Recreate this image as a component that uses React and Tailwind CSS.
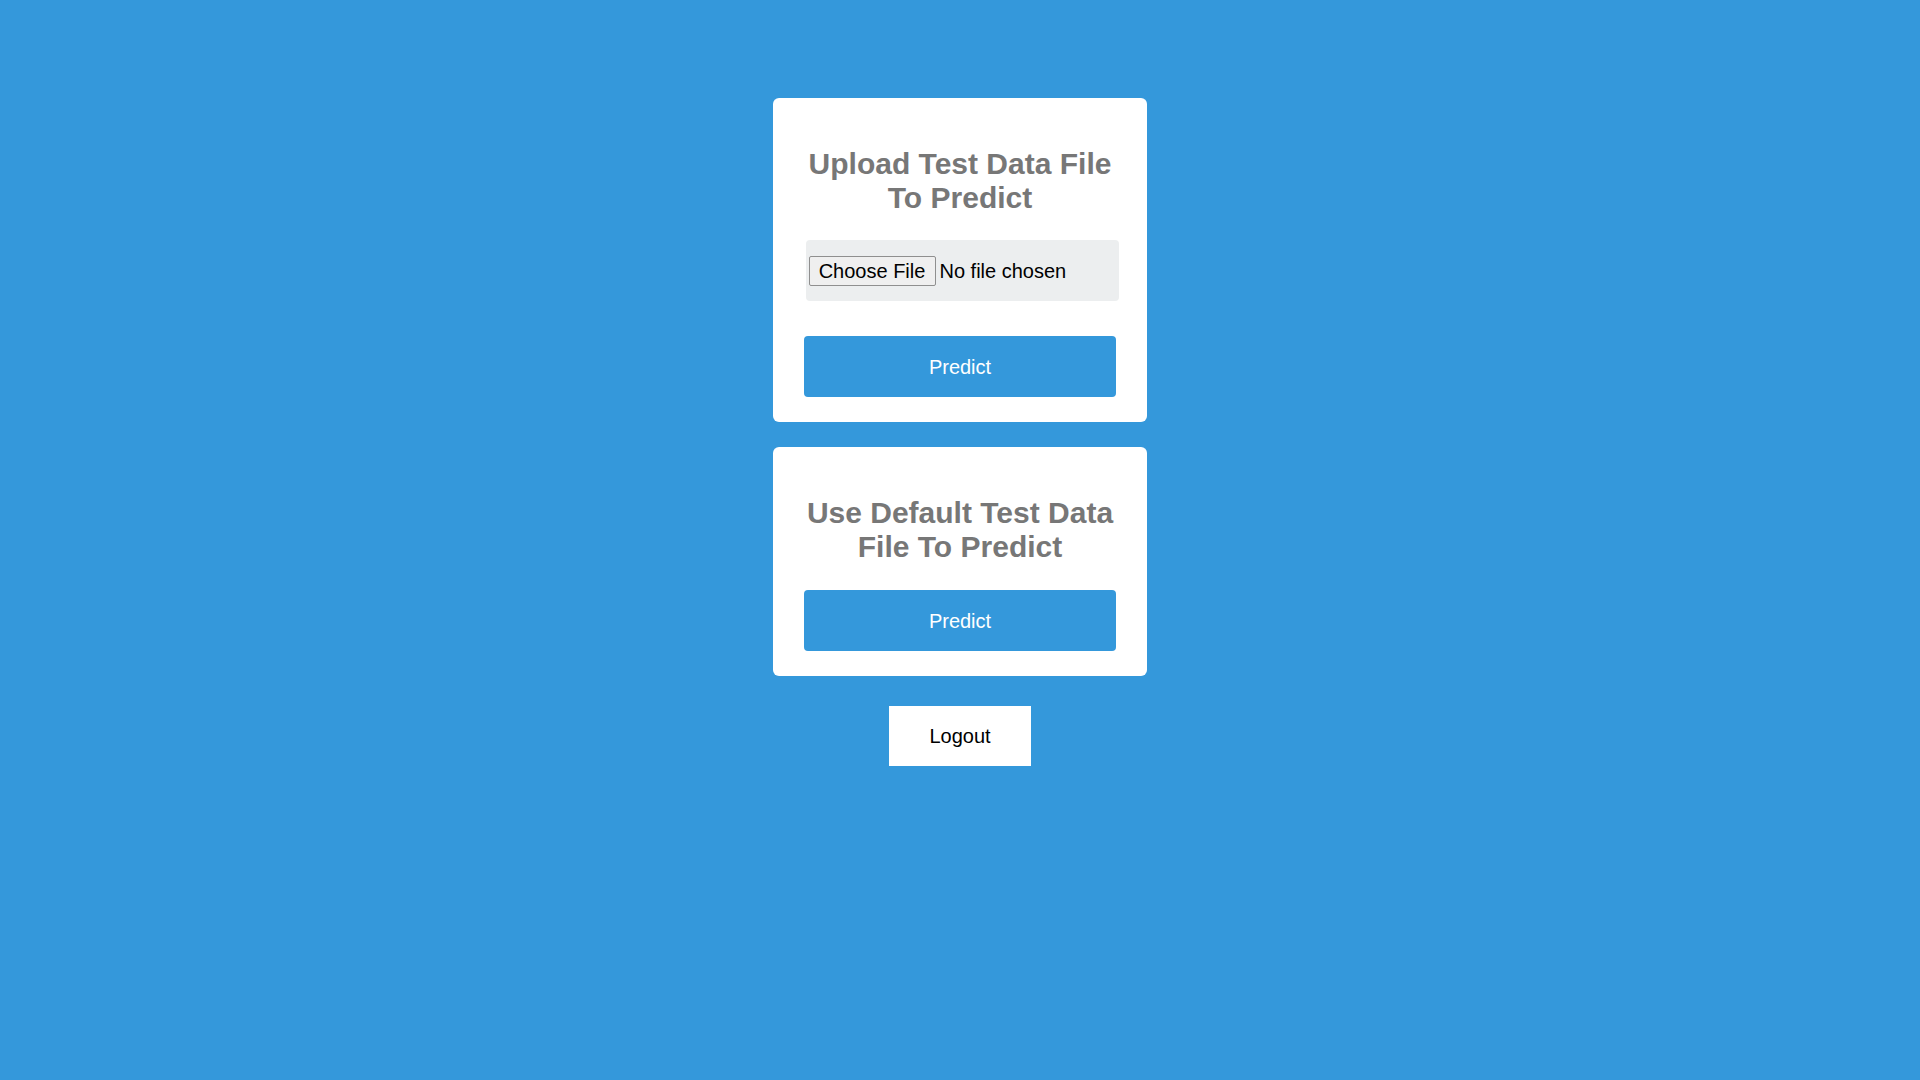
import React, { useState } from 'react';

const PredictButton = ({ onClick }) => (
  <button
    type="button"
    onClick={onClick}
    className="h-[61px] w-[312px] rounded-[4px] bg-[#3498db] text-[20px] text-white"
  >
    Predict
  </button>
);

const Card = ({ children }) => (
  <div className="flex w-[374px] flex-col items-center rounded-[6px] bg-white px-[31px] pb-[25px] pt-[49px]">
    {children}
  </div>
);

const Heading = ({ children }) => (
  <h2 className="w-[312px] text-center text-[30px] font-bold leading-[34px] text-[#777777]">
    {children}
  </h2>
);

export default function App() {
  const [fileName, setFileName] = useState('');

  return (
    <div
      className="flex min-h-screen flex-col items-center bg-[#3498db] pt-[98px]"
      style={{ fontFamily: '"Liberation Sans", Arial, sans-serif' }}
    >
      <Card>
        <Heading>Upload Test Data File To Predict</Heading>
        <div className="ml-[4px] mt-[25px] flex h-[61px] w-[313px] items-center rounded-[4px] bg-[#eceeef] pl-[3px]">
          <label className="flex cursor-pointer items-center">
            <input
              type="file"
              className="hidden"
              onChange={(e) => setFileName(e.target.files?.[0]?.name || '')}
            />
            <span className="flex h-[30px] w-[127px] items-center justify-center rounded-[2px] border border-[#8f8f8f] bg-[#efefef] text-[20px] text-black">
              Choose File
            </span>
            <span className="ml-[4px] text-[20px] text-black">
              {fileName || 'No file chosen'}
            </span>
          </label>
        </div>
        <div className="mt-[35px]">
          <PredictButton />
        </div>
      </Card>

      <div className="mt-[25px]">
        <Card>
          <Heading>Use Default Test Data File To Predict</Heading>
          <div className="mt-[26px]">
            <PredictButton />
          </div>
        </Card>
      </div>

      <button
        type="button"
        className="mt-[30px] h-[60px] w-[142px] bg-white text-[20px] text-black"
      >
        Logout
      </button>
    </div>
  );
}
